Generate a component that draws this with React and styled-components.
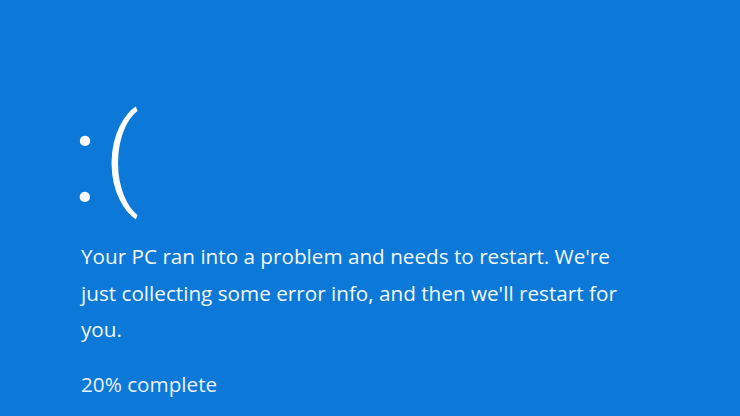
import styled, { createGlobalStyle } from 'styled-components'

const Global = createGlobalStyle`
  html, body {
    margin: 0;
    padding: 0;
    background: #0c78d7;
  }
`

const Screen = styled.div`
  width: 740px;
  height: 416px;
  overflow: hidden;
  background: #0c78d7;
  color: #fff;
  font-family: 'Open Sans', 'Noto Sans', sans-serif;
  box-sizing: border-box;
  padding: 82px 0 0 81px;
  display: flex;
  flex-direction: column;
`

const Face = styled.div`
  font-family: 'Roboto', sans-serif;
  font-size: 110px;
  font-weight: 300;
  line-height: 140px;
  height: 140px;
  margin-left: -8px;
  display: flex;
  align-items: baseline;
`

// the colon's dots sit a little further apart than the font gives
const Eyes = styled.span`
  font-size: 124px;
  margin-left: -1px;
  margin-right: 6px;
  position: relative;
  top: 7px;
`

const Message = styled.p`
  margin: 16px 0 0;
  font-size: 20.7px;
  line-height: 36.5px;
  width: 560px;
  color: #f4f8fd;
`

const Progress = styled.p`
  margin: 18px 0 0;
  font-size: 20.7px;
  line-height: 36px;
  color: #e9f1fb;
`

const App = () => {
  return (
    <>
      <Global />
      <Screen>
        <Face>
          <Eyes>:</Eyes>
          <span>(</span>
        </Face>
        <Message>
          Your PC ran into a problem and needs to restart. We're just
          collecting some error info, and then we'll restart for you.
        </Message>
        <Progress>20% complete</Progress>
      </Screen>
    </>
  )
}

export default App
